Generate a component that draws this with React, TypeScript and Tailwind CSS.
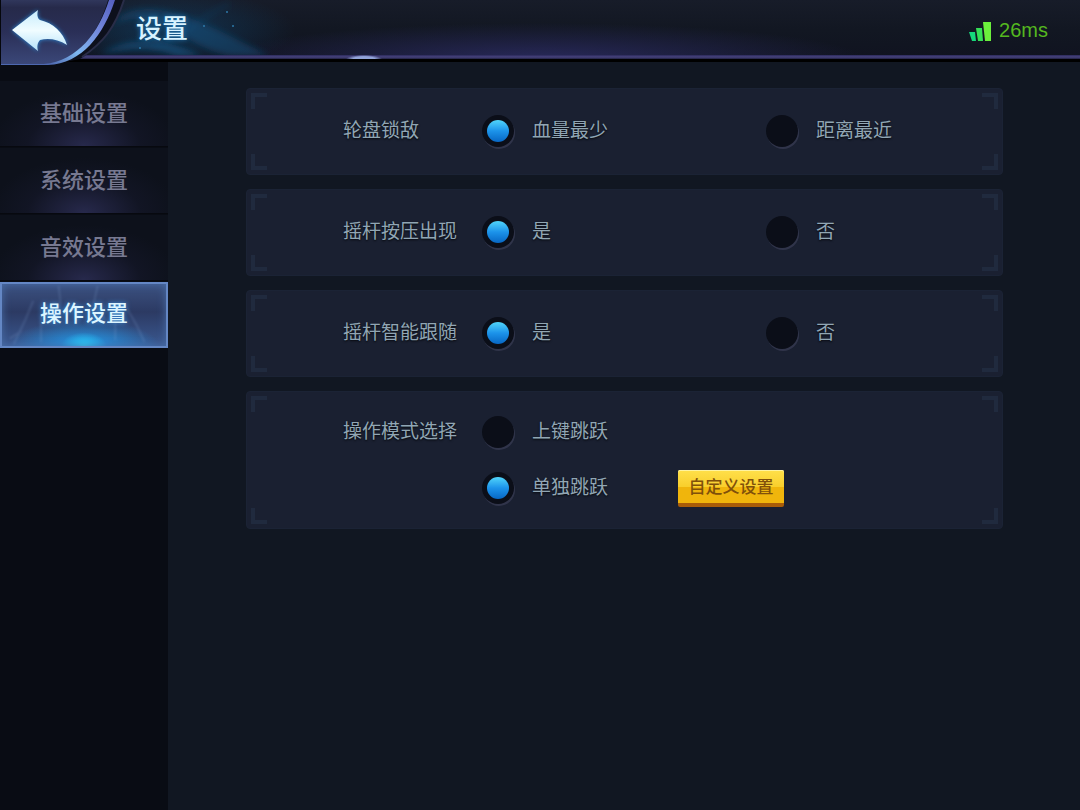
import { useState } from "react";

const tabs = ["基础设置", "系统设置", "音效设置", "操作设置"];

const rows = [
  { name: "target", label: "轮盘锁敌", options: ["血量最少", "距离最近"] },
  { name: "press", label: "摇杆按压出现", options: ["是", "否"] },
  { name: "follow", label: "摇杆智能跟随", options: ["是", "否"] },
];

function BackArrow() {
  return (
    <svg className="block" width="130" height="66" viewBox="0 0 130 66" fill="none" aria-hidden="true">
      <defs>
        <linearGradient id="panel" x1="0" y1="0" x2="0" y2="1">
          <stop offset="0" stopColor="#30375c" />
          <stop offset="0.12" stopColor="#262a4a" />
          <stop offset="0.5" stopColor="#2a2f57" />
          <stop offset="1" stopColor="#3a4778" />
        </linearGradient>
        <linearGradient id="rim" x1="114" y1="0" x2="50" y2="64" gradientUnits="userSpaceOnUse">
          <stop offset="0" stopColor="#5560c0" />
          <stop offset="0.35" stopColor="#7387dc" />
          <stop offset="0.7" stopColor="#7fb8f0" />
          <stop offset="1" stopColor="#4d68b0" />
        </linearGradient>
        <linearGradient id="arrow" x1="0" y1="10" x2="0" y2="51" gradientUnits="userSpaceOnUse">
          <stop offset="0" stopColor="#c6ecfc" />
          <stop offset="0.5" stopColor="#f0fcff" />
          <stop offset="1" stopColor="#b4e2fa" />
        </linearGradient>
        <filter id="glow" x="-30%" y="-30%" width="160%" height="160%">
          <feGaussianBlur stdDeviation="2" />
        </filter>
      </defs>
      <path d="M0 0H124C115 28 103 44 80 59L50 65H0Z" fill="#0d101c" />
      <path d="M124 0C115 28 103 43 82 57" stroke="#292d48" strokeWidth="2" />
      <path d="M0 0H108C98 34 78 59 50 64H0Z" fill="url(#panel)" />
      <path d="M109 0H115C104 34 82 64 48 65H0V64H44C78 61 99 32 109 0Z" fill="url(#rim)" />
      <path
        d="M12 30L38 10C37 14 37 18 40 20C53 23 63 32 67 45C58 39 48 38 40 40C37 43 37 47 38 51Z"
        fill="#2c8ddb"
        filter="url(#glow)"
      />
      <path
        d="M12 30L38 10C37 14 37 18 40 20C53 23 63 32 67 45C58 39 48 38 40 40C37 43 37 47 38 51Z"
        fill="url(#arrow)"
      />
      <path d="M0 0V65" stroke="#05070c" strokeWidth="2" />
    </svg>
  );
}

function HeaderSmoke() {
  return (
    <svg className="absolute top-0 left-20 block" width="220" height="56" viewBox="0 0 220 56" fill="none" aria-hidden="true">
      <defs>
        <radialGradient id="haze">
          <stop offset="0" stopColor="#10456f" stopOpacity="0.6" />
          <stop offset="1" stopColor="#10456f" stopOpacity="0" />
        </radialGradient>
        <filter id="soft" x="-20%" y="-20%" width="140%" height="140%">
          <feGaussianBlur stdDeviation="3" />
        </filter>
      </defs>
      <ellipse cx="90" cy="30" rx="125" ry="40" fill="url(#haze)" />
      <g filter="url(#soft)">
        <path d="M34 24C44 6 76 6 104 16S150 36 190 56H150C120 50 104 34 84 26S50 16 34 24Z" fill="#175a8c" opacity="0.42" />
        <path d="M20 54C44 38 84 36 122 56H96C74 46 50 48 20 54Z" fill="#1c6fa8" opacity="0.45" />
        <path d="M72 46C104 40 118 16 150 4" stroke="#1a5f92" strokeWidth="5" opacity="0.15" />
      </g>
      <g fill="#2d79a8">
        <circle cx="147" cy="12" r="1" />
        <circle cx="124" cy="26" r="1" />
        <circle cx="153" cy="26" r="1" />
        <circle cx="60" cy="48" r="1" />
      </g>
    </svg>
  );
}

function Signal() {
  return (
    <svg width="22" height="20" viewBox="0 0 22 20" aria-hidden="true">
      <path d="M0 11H6L7 20H3Z" fill="#16d77c" />
      <path d="M7 7H13L14 20H9Z" fill="#35df57" />
      <path d="M14 1H22V20H16Z" fill="#6bf03c" />
    </svg>
  );
}

function Header() {
  return (
    <header className="relative flex h-[62px] items-start justify-between border-b-3 border-black bg-linear-to-b from-[#171c29] via-[#121722] to-[#101320] pr-8">
      <div className="absolute inset-x-0 bottom-0 h-9 bg-[radial-gradient(ellipse_30%_100%_at_50%_100%,#28295a,transparent)]" />
      <HeaderSmoke />
      <div className="absolute inset-x-0 bottom-0 h-1 bg-linear-to-b from-[#2b2a5a] via-[#48447f] to-[#20203f]" />
      <div className="absolute bottom-0 left-[346px] h-1 w-9 bg-[radial-gradient(ellipse_50%_100%_at_50%_100%,#93a4da_60%,transparent)]" />
      <div className="relative flex">
        <button type="button" aria-label="返回" className="h-[62px] cursor-pointer">
          <BackArrow />
        </button>
        <h1 className="ml-1.5 pt-[9px] text-[26px] leading-10 font-medium text-[#d8f3ff] [text-shadow:0_0_5px_#2279b8]">
          设置
        </h1>
      </div>
      <div className="relative flex items-center gap-2 pt-5">
        <Signal />
        <span className="pb-0.5 text-[20px] leading-5 text-[#54b81f]">26ms</span>
      </div>
    </header>
  );
}

function ActiveTexture() {
  return (
    <svg
      className="absolute inset-0 h-full w-full"
      viewBox="0 0 168 66"
      preserveAspectRatio="none"
      fill="none"
      aria-hidden="true"
    >
      <defs>
        <filter id="blurred">
          <feGaussianBlur stdDeviation="1" />
        </filter>
      </defs>
      <g stroke="#8fb0e0" strokeWidth="2" opacity="0.18" filter="url(#blurred)">
        <path d="M12 64L24 38L32 18" />
        <path d="M20 50L8 58" />
        <path d="M58 2L60 20L54 40" />
        <path d="M98 2L94 20L106 38" />
        <path d="M128 26L138 44L146 62" />
        <path d="M40 34V62" />
        <path d="M116 36V60" />
      </g>
    </svg>
  );
}

function Sidebar() {
  const [active, setActive] = useState("操作设置");

  return (
    <nav className="w-[168px] shrink-0 bg-[#090c14] pt-[19px]">
      {tabs.map((tab) =>
        tab === active ? (
          <button
            key={tab}
            type="button"
            aria-current="page"
            className="relative block h-[66px] w-full border-2 border-[#6487c4] bg-[radial-gradient(ellipse_14%_22%_at_50%_100%,#2ad4ff,transparent),radial-gradient(ellipse_46%_42%_at_50%_100%,#1f9df0,transparent),linear-gradient(to_bottom,#3b5180,#2c3a63_45%,#3a5890)] shadow-[inset_0_0_8px_#4a6fa8]"
          >
            <ActiveTexture />
            <span className="relative block pb-1 text-[22px] font-medium text-[#dcf5ff] [text-shadow:0_0_5px_#3a9df0]">
              {tab}
            </span>
          </button>
        ) : (
          <button
            key={tab}
            type="button"
            onClick={() => setActive(tab)}
            className="mb-px block h-[66px] w-full cursor-pointer border-b border-[#07090f] bg-[#0d111b] bg-[radial-gradient(ellipse_56%_85%_at_50%_100%,#27294c,#191b3266_60%,transparent)] text-[22px] font-medium text-[#777991]"
          >
            {tab}
          </button>
        ),
      )}
    </nav>
  );
}

function Corners() {
  return (
    <>
      <span className="absolute top-1 left-1 size-4 border-t-4 border-l-4 border-[#202a3e]" />
      <span className="absolute top-1 right-1 size-4 border-t-4 border-r-4 border-[#202a3e]" />
      <span className="absolute bottom-1 left-1 size-4 border-b-4 border-l-4 border-[#202a3e]" />
      <span className="absolute right-1 bottom-1 size-4 border-r-4 border-b-4 border-[#202a3e]" />
    </>
  );
}

interface OptionProps {
  name: string;
  label: string;
  checked?: boolean;
}

function Option({ name, label, checked }: OptionProps) {
  return (
    <label className="flex w-fit cursor-pointer items-center gap-[18px]">
      <input
        type="radio"
        name={name}
        defaultChecked={checked}
        className="grid size-8 appearance-none place-content-center rounded-full bg-[#0b0e18] shadow-[1px_2px_0_#30344a] before:size-[22px] before:rounded-full checked:before:bg-linear-to-b checked:before:from-[#51d5fa] checked:before:via-[#1c93ea] checked:before:to-[#0867c4]"
      />
      {label}
    </label>
  );
}

const card =
  "relative grid grid-cols-[139px_285fr_237fr] rounded-sm border border-[#1b2335] bg-[#1a2031] pl-[96px]";

export default function App() {
  return (
    <div className="flex min-h-screen flex-col bg-[#111722] font-['Liberation_Sans','Noto_Sans_CJK_SC',sans-serif]">
      <Header />
      <div className="flex flex-1">
        <Sidebar />
        <main className="flex flex-1 flex-col gap-3.5 pt-[26px] pr-[77px] pl-[78px] text-[19px] leading-7 text-[#91a6b4] [text-shadow:0_1px_2px_#05070c]">
          {rows.map((row) => (
            <div key={row.name} role="radiogroup" aria-label={row.label} className={`${card} h-[87px] items-center pb-0.5`}>
              <Corners />
              <span>{row.label}</span>
              <Option name={row.name} label={row.options[0]} checked />
              <Option name={row.name} label={row.options[1]} />
            </div>
          ))}
          <div role="radiogroup" aria-label="操作模式选择" className={`${card} gap-y-5 py-[22px]`}>
            <Corners />
            <span className="self-center">操作模式选择</span>
            <div className="col-span-2 flex h-9 items-center">
              <Option name="mode" label="上键跳跃" />
            </div>
            <div className="col-span-2 col-start-2 flex h-9 items-center gap-[70px]">
              <Option name="mode" label="单独跳跃" checked />
              <button
                type="button"
                className="h-[37px] w-[106px] cursor-pointer rounded-xs border-b-4 border-[#a85c08] bg-linear-to-b from-[#ffe04a] from-0% via-[#f9cf2c] via-50% to-[#f0b50c] to-50% pt-1 text-[17px] leading-7 font-medium text-[#80500a] shadow-[inset_0_1px_0_#fff3a0] [text-shadow:none]"
              >
                自定义设置
              </button>
            </div>
          </div>
        </main>
      </div>
    </div>
  );
}
